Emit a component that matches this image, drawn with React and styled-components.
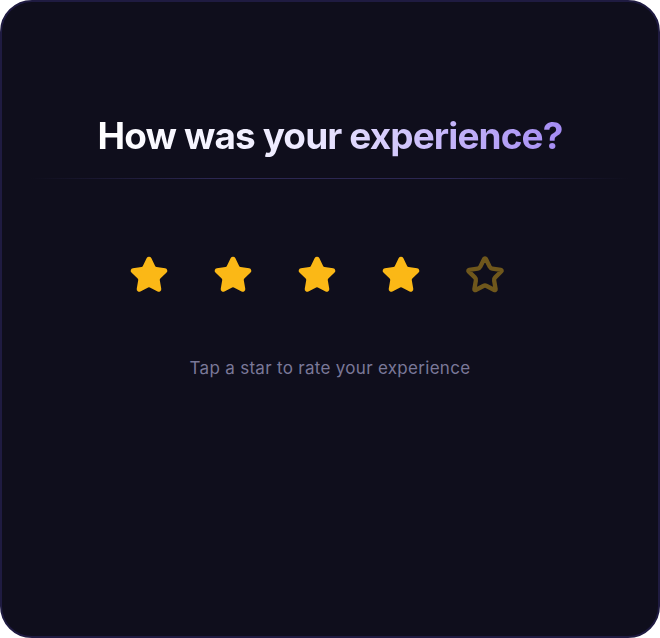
import React from "react";
import styled, { createGlobalStyle } from "styled-components";

const Global = createGlobalStyle`
  html, body { margin: 0; padding: 0; background: #ffffff; }
  * { box-sizing: border-box; }
  body { font-family: Inter, "Noto Sans", sans-serif; }
`;

const Card = styled.div`
  width: 660px;
  height: 638px;
  background: #0f0e1c;
  border: 2px solid #1f1b41;
  border-radius: 32px;
  display: flex;
  flex-direction: column;
  align-items: center;
  padding-top: 108px;
`;

const Title = styled.h1`
  margin: 0;
  font-family: Inter, sans-serif;
  font-weight: 700;
  font-size: 37px;
  line-height: 52px;
  letter-spacing: -0.9px;
  background: linear-gradient(90deg, #ffffff 0%, #ece9ff 45%, #a58cf4 100%);
  -webkit-background-clip: text;
  background-clip: text;
  color: transparent;
`;

const Divider = styled.div`
  width: 600px;
  height: 1px;
  margin-top: 16px;
  background: linear-gradient(90deg, rgba(60,52,110,0) 0%, #2c2752 30%, #2c2752 70%, rgba(60,52,110,0) 100%);
`;

const StarRow = styled.div`
  display: flex;
  gap: 44px;
  margin-top: 76px;
  margin-right: 27px;
`;

const StarButton = styled.button`
  width: 40px;
  height: 40px;
  padding: 0;
  border: none;
  background: none;
  cursor: pointer;
  display: flex;
`;

const Hint = styled.p`
  margin: 61px 0 0;
  font-family: Inter, sans-serif;
  font-size: 17px;
  line-height: 24px;
  color: #7a7898;
  letter-spacing: 0.3px;
`;

const STAR =
  "M11.525 2.295a.53.53 0 0 1 .95 0l2.31 4.679a2.123 2.123 0 0 0 1.595 1.16l5.166.756a.53.53 0 0 1 .294.904l-3.736 3.638a2.123 2.123 0 0 0-.611 1.878l.882 5.14a.53.53 0 0 1-.771.56l-4.618-2.428a2.122 2.122 0 0 0-1.973 0L6.396 21.01a.53.53 0 0 1-.77-.56l.881-5.139a2.122 2.122 0 0 0-.611-1.879L2.16 9.795a.53.53 0 0 1 .294-.906l5.165-.755a2.122 2.122 0 0 0 1.597-1.16z";

function Star({ filled }) {
  const c = filled ? "#fbb816" : "#6f571c";
  return (
    <svg width="40" height="40" viewBox="0 0 24 24" fill={filled ? c : "none"} stroke={c} strokeWidth={filled ? 2 : 2.6} strokeLinejoin="round" strokeLinecap="round">
      <path d={STAR} />
    </svg>
  );
}

export default function App() {
  const rating = 4;
  return (
    <>
      <Global />
      <Card>
        <Title>How was your experience?</Title>
        <Divider />
        <StarRow>
          {[1, 2, 3, 4, 5].map((i) => (
            <StarButton key={i} aria-label={`${i} star`}>
              <Star filled={i <= rating} />
            </StarButton>
          ))}
        </StarRow>
        <Hint>Tap a star to rate your experience</Hint>
      </Card>
    </>
  );
}
